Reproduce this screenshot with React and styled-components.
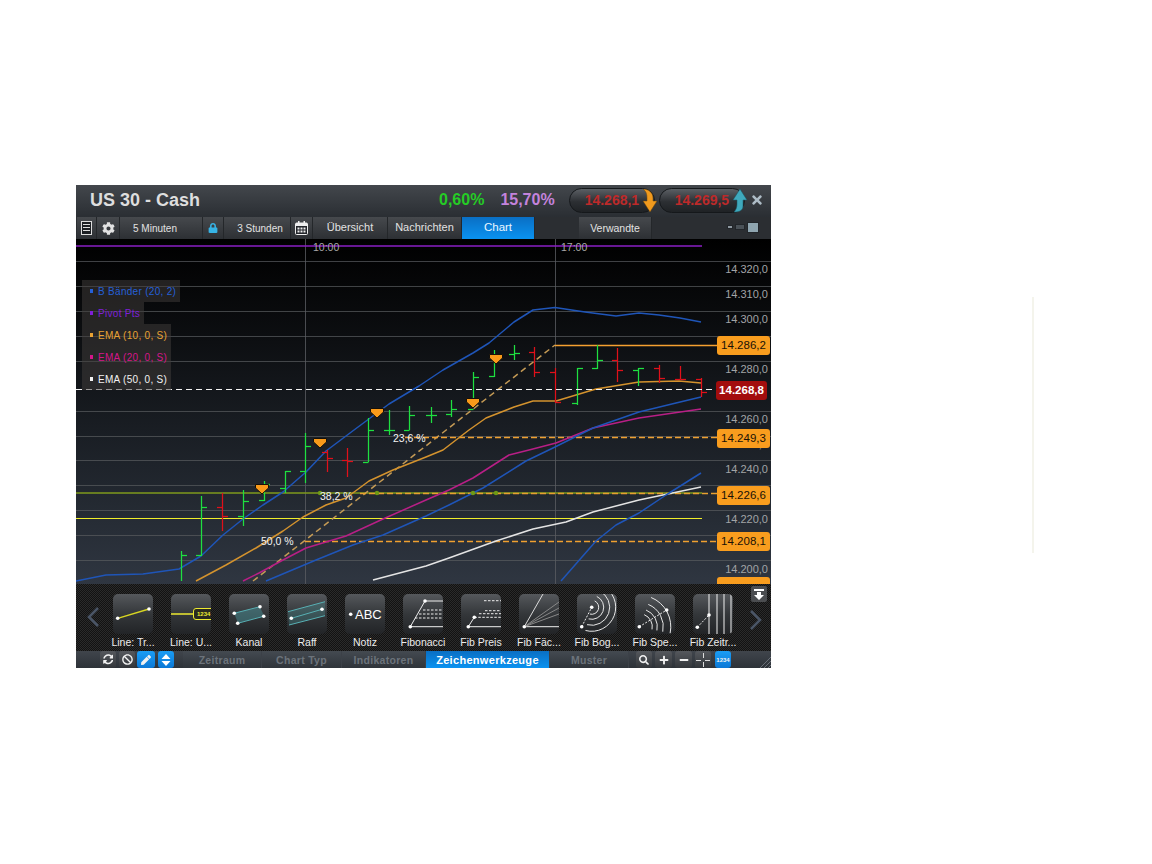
import React from 'react';
import styled, { createGlobalStyle } from 'styled-components';
import { FaCog, FaLock, FaSyncAlt, FaBan, FaPen, FaSearch, FaPlus, FaMinus, FaTimes } from 'react-icons/fa';

const GlobalStyle = createGlobalStyle`
  html, body {
    margin: 0;
    background: #fff;
    font-family: "Liberation Sans", Arial, sans-serif;
  }
`;

const Page = styled.div`
  display: flex;
  align-items: flex-start;
  padding: 185px 0 0 76px;
  min-height: 679px;
`;

const Widget = styled.div`
  width: 695px;
  height: 483px;
  display: flex;
  flex-direction: column;
  flex: none;
  overflow: hidden;
  background: #111;
`;

const FaintRule = styled.div`
  width: 2px;
  height: 256px;
  margin: 112px 0 0 261px;
  background: #f4f4ec;
`;

/* title */
const TitleBar = styled.div`
  height: 32px;
  display: flex;
  align-items: center;
  flex: none;
  box-sizing: border-box;
  padding: 0 0 2px 14px;
  background: linear-gradient(#43474c, #2a2e33);
`;

const Title = styled.div`
  width: 349px;
  flex: none;
  font-size: 18px;
  font-weight: 700;
  color: #dedede;
`;

const Percent = styled.div`
  font-size: 16px;
  font-weight: 700;
  color: ${(p) => p.$color};
  margin-right: ${(p) => p.$gap}px;
`;

const Pill = styled.div`
  position: relative;
  width: 86px;
  height: 25px;
  box-sizing: border-box;
  margin-right: 4px;
  padding-left: 15px;
  border-radius: 13px;
  border: 1px solid #15181b;
  background: linear-gradient(#5b5f64, #2c2f33 55%, #1f2225);
  font-size: 14px;
  font-weight: 700;
  line-height: 22px;
  color: #bd2a2a;
`;

const PillArrow = styled.svg`
  position: absolute;
  right: -3px;
  top: 0;
`;

const CloseButton = styled.div`
  display: flex;
  margin-left: 1px;
  color: #aebcc6;
  font-size: 14px;
`;

/* tabs */
const TabBar = styled.div`
  height: 22px;
  display: flex;
  flex: none;
  padding-left: 1px;
  background: #2b2e32;
`;

const Tab = styled.div`
  width: ${(p) => p.$w}px;
  margin-left: ${(p) => p.$ml || 0}px;
  padding: 0 ${(p) => p.$padRight || 0}px ${(p) => p.$padBottom || 0}px ${(p) => p.$padLeft || 0}px;
  flex: none;
  display: flex;
  align-items: center;
  justify-content: center;
  box-sizing: border-box;
  border-right: 1px solid #24272a;
  color: ${(p) => (p.$active ? '#eaf6ff' : '#e2e2e2')};
  font-size: ${(p) => p.$size || 11}px;
  background: ${(p) => (p.$active ? 'linear-gradient(#0a6fc4, #0a92f0)' : 'linear-gradient(#46494d, #2d3034)')};
`;

const WindowIcons = styled.div`
  margin-left: auto;
  padding: 0 12px 2px 0;
  display: flex;
  align-items: center;
  gap: 2px;
`;

const WindowIcon = styled.div`
  width: ${(p) => p.$w}px;
  height: ${(p) => p.$h}px;
  box-sizing: border-box;
  background: ${(p) => p.$color};
  border: 1px solid #22262a;
`;

/* chart */
const ChartArea = styled.div`
  position: relative;
  height: 345px;
  flex: none;
  overflow: hidden;
  background: linear-gradient(#000 0%, #0d0f12 30%, #1e232a 65%, #2f3641 100%);
`;

const ChartSvg = styled.svg`
  display: block;
  font-family: "Liberation Sans", Arial, sans-serif;
`;

const Legend = styled.div`
  position: absolute;
  left: 6px;
  top: 41px;
  display: flex;
  flex-direction: column;
  align-items: flex-start;
`;

const LegendRow = styled.div`
  height: 22px;
  display: flex;
  align-items: center;
  gap: 5px;
  padding: 0 4px 0 8px;
  background: rgba(66, 62, 60, 0.5);
  color: ${(p) => p.$color};
  font-size: 10px;
  letter-spacing: 0.3px;
  &::before {
    content: '';
    width: 3px;
    height: 4px;
    background: ${(p) => p.$color};
  }
`;

const PriceTag = styled.div`
  position: absolute;
  left: ${(p) => (p.$current ? 640 : 641)}px;
  top: ${(p) => p.$top}px;
  width: ${(p) => (p.$current ? 51 : 53)}px;
  height: 19px;
  border-radius: 3px;
  text-align: center;
  line-height: 19px;
  font-size: 11.5px;
  font-weight: ${(p) => (p.$current ? 700 : 400)};
  color: ${(p) => (p.$current ? '#fff' : '#1a1206')};
  background: ${(p) => (p.$current ? '#a30d0d' : '#f99d1e')};
`;

/* drawing tools */
const ToolStrip = styled.div`
  position: relative;
  height: 67px;
  flex: none;
  display: flex;
  padding: 10px 0 0 10px;
  box-sizing: border-box;
  background: repeating-conic-gradient(#121212 0 25%, #2a2a2a 0 50%) 0 0 / 2px 2px;
`;

const Chevron = styled.svg`
  flex: none;
  margin-top: ${(p) => p.$top}px;
  margin-left: ${(p) => p.$left}px;
  margin-right: ${(p) => p.$right}px;
`;

const Tool = styled.div`
  width: 58px;
  flex: none;
  display: flex;
  flex-direction: column;
  align-items: center;
`;

const ToolButton = styled.div`
  width: 40px;
  height: 40px;
  border-radius: 5px;
  overflow: hidden;
  background: linear-gradient(#55585c, #34373a 50%, #222427);
`;

const ToolLabel = styled.div`
  margin-top: 2px;
  font-size: 10.5px;
  line-height: 13px;
  color: #ececec;
  white-space: nowrap;
`;

const CollapseButton = styled.div`
  position: absolute;
  left: 675px;
  top: 2px;
  width: 16px;
  height: 16px;
  border-radius: 2px;
  display: flex;
  justify-content: center;
  align-items: center;
  background: #4b4d50;
`;

/* bottom */
const BottomBar = styled.div`
  position: relative;
  height: 17px;
  flex: none;
  display: flex;
  align-items: stretch;
  padding-left: 24px;
  background: linear-gradient(#40454c, #2d3238);
`;

const SquareButton = styled.div`
  width: ${(p) => p.$w || 16}px;
  margin-left: ${(p) => p.$ml || 0}px;
  margin-right: ${(p) => p.$mr || 2}px;
  flex: none;
  border-radius: 3px;
  display: flex;
  align-items: center;
  justify-content: center;
  font-size: ${(p) => p.$size || 11}px;
  color: #f1f1f1;
  background: ${(p) =>
    p.$blue ? 'linear-gradient(#1a9df5, #0b78d6)' : 'linear-gradient(#55585d, #33363a)'};
`;

const BottomTab = styled.div`
  width: ${(p) => p.$w}px;
  margin-left: ${(p) => p.$ml || 0}px;
  flex: none;
  box-sizing: border-box;
  display: flex;
  align-items: center;
  justify-content: center;
  font-size: ${(p) => (p.$active ? 11 : 10.5)}px;
  font-weight: 700;
  letter-spacing: 0.3px;
  color: ${(p) => (p.$active ? '#fff' : '#6c737b')};
  border-right: 1px solid #3c4148;
  background: ${(p) => (p.$active ? 'linear-gradient(#0a6fc4, #0a92f0)' : 'linear-gradient(#444a51, #2f343a)')};
`;

const Grip = styled.svg`
  position: absolute;
  right: 0;
  bottom: 0;
`;

const gridYs = [261.5, 286.5, 311.5, 336.5, 361.5, 411.5, 436.5, 460.5, 485.5, 510.5, 535.5, 560.5];
const axis = [
  ['14.320,0', 273], ['14.310,0', 298], ['14.300,0', 323], ['14.280,0', 373], ['14.260,0', 423],
  ['14.250,0', 448], ['14.240,0', 473], ['14.220,0', 523], ['14.200,0', 573],
];

const lines = [
  ['#1f55b8', '76,581 106,575 143,574 179,569 201,556 223,535 243,519 263,505 283,492 306,472 326,451 350,433 389,404 419,386 443,370 473,353 489,343 514,322 533,310 555,307.5 585,312 616,316 639,313 659,315 680,318 701,322'],
  ['#d4932e', '196,581 226,565 256,548 283,531 303,517 326,505 346,498 369,481 393,470 426,457 443,450 469,430 486,418 514,407 533,401 556,401 596,389 639,382 679,381 701,383'],
  ['#b81f86', '243,581 259,573 283,560 306,548 346,536 383,519 426,500 449,490 473,478 509,455 529,450 556,443 593,428 639,418 701,409'],
  ['#1f55b8', '266,581 316,560 353,545 383,535 426,516 449,505 483,488 526,461 553,448 593,428 639,412 676,403 701,397'],
  ['#e4e4e4', '373,580 426,566 449,558 496,541 533,529 566,522 593,512 639,500 701,487'],
  ['#1f55b8', '561,581 596,541 616,525 639,513 666,495 701,473'],
];

const bars = [
  [181, 551, 581, null, 555, 'g'], [201, 496, 556, 555, 507, 'g'], [222, 493, 531, 507, 516, 'r'],
  [243, 490, 526, 516, 501, 'g'], [264, 481, 501, 500, 484, 'g'], [285, 471, 493, 488, 471, 'g'],
  [305, 433, 483, 471, 446, 'g'], [327, 450, 472, 452, 458, 'r'], [347, 448, 477, 460, 461, 'r'],
  [368, 418, 462, 462, 430, 'g'], [389, 410, 435, 430, 430, 'g'], [409, 406, 430, 430, 415, 'g'],
  [431, 407, 423, 415, 415, 'g'], [451, 400, 417, 414, 409, 'g'], [473, 372, 408, 409, 377, 'g'],
  [494, 350, 377, 376, 356, 'g'], [514, 345, 360, 354, 353, 'g'], [534, 347, 377, 352, 372, 'r'],
  [555, 368, 403, 372, 402, 'r'], [577, 368, 405, 403, 368, 'g'], [597, 345, 369, 368, 360, 'g'],
  [617, 348, 382, 360, 370, 'r'], [638, 368, 386, 370, 368, 'g'], [659, 365, 383, 368, 378, 'r'],
  [680, 366, 379, 379, 379, 'r'], [701, 378, 397, 379, 392, 'r'],
];

const markers = [[262, 489], [320, 443], [377, 413], [473, 403], [496, 359]];

const Chart = () => (
  <ChartSvg width="695" height="345" viewBox="76 239 695 345">
    {gridYs.map((y) => (
      <line key={y} x1="76" x2="771" y1={y} y2={y} stroke="#5a5d60" strokeOpacity="0.7" />
    ))}
    <line x1="305.5" x2="305.5" y1="239" y2="584" stroke="#5a5d62" strokeOpacity="0.8" />
    <line x1="555.5" x2="555.5" y1="239" y2="584" stroke="#5a5d62" strokeOpacity="0.8" />
    <line x1="76" x2="702" y1="246" y2="246" stroke="#8a1fc4" strokeWidth="1.5" />
    <text x="313" y="251" fontSize="10.5" fill="#a8a8a8">10:00</text>
    <text x="561" y="251" fontSize="10.5" fill="#a8a8a8">17:00</text>
    {axis.map(([t, y]) => (
      <text key={t} x="768" y={y} fontSize="11" textAnchor="end" fill="#a2a4a6">{t}</text>
    ))}
    <line x1="76" x2="702" y1="518.5" y2="518.5" stroke="#f0ee2a" strokeWidth="1.1" />
    <line x1="76" x2="702" y1="493" y2="493" stroke="#7f9a1c" strokeWidth="1.3" />
    <line x1="253" y1="581" x2="555" y2="345" stroke="#c49a55" strokeWidth="1.5" strokeDasharray="6 4" />
    <line x1="555" x2="717" y1="345.5" y2="345.5" stroke="#f5a030" strokeWidth="1.6" />
    <line x1="405" x2="717" y1="437.5" y2="437.5" stroke="#f0a030" strokeWidth="1.6" strokeDasharray="6 3" />
    <line x1="360" x2="717" y1="493.5" y2="493.5" stroke="#e8a030" strokeWidth="1.6" strokeDasharray="6 3" />
    <line x1="305" x2="717" y1="541.5" y2="541.5" stroke="#f0a030" strokeWidth="1.6" strokeDasharray="6 3" />
    {lines.map(([c, pts], i) => (
      <polyline key={i} points={pts} fill="none" stroke={c} strokeWidth="1.5" strokeLinejoin="round" />
    ))}
    {bars.map(([x, hi, lo, l, r, c]) => {
      const col = c === 'g' ? '#1fe040' : '#e0101a';
      return (
        <g key={x} stroke={col} strokeWidth="1.25">
          <line x1={x + 0.5} x2={x + 0.5} y1={hi} y2={lo} />
          {l !== null && <line x1={x - 5} x2={x + 0.5} y1={l + 0.5} y2={l + 0.5} />}
          <line x1={x + 0.5} x2={x + 6} y1={r + 0.5} y2={r + 0.5} />
        </g>
      );
    })}
    <line x1="76" x2="712" y1="389.5" y2="389.5" stroke="#f2f2f2" strokeWidth="1.2" strokeDasharray="6 4" />
    {[320, 377, 473, 496].map((x) => (
      <circle key={x} cx={x} cy="493" r="2.2" fill="#6f9a14" />
    ))}
    {markers.map(([x, y]) => (
      <path
        key={x}
        d={`M${x - 6.5} ${y - 4.5}h13v3.5l-6.5 6l-6.5 -6z`}
        fill="#f99a1a"
        stroke="#14100a"
        strokeWidth="1"
        strokeLinejoin="round"
      />
    ))}
    <text x="393" y="442" fontSize="10.5" fill="#f4f4f4">23,6 %</text>
    <text x="320" y="500" fontSize="10.5" fill="#f4f4f4">38,2 %</text>
    <text x="261" y="545" fontSize="10.5" fill="#f4f4f4">50,0 %</text>
  </ChartSvg>
);

const Dot = ({ x, y }) => <circle cx={x} cy={y} r="1.8" fill="#fff" />;

const arc = (cx, cy, r, from, to) => {
  const a = (from * Math.PI) / 180;
  const b = (to * Math.PI) / 180;
  return `M${cx + r * Math.cos(a)} ${cy + r * Math.sin(a)}A${r} ${r} 0 0 1 ${cx + r * Math.cos(b)} ${cy + r * Math.sin(b)}`;
};

const toolIcons = {
  trend: (
    <>
      <line x1="4.7" y1="24.3" x2="36" y2="15" stroke="#d8d622" strokeWidth="1.4" />
      <Dot x={4.7} y={24.3} /><Dot x={36} y={15} />
    </>
  ),
  level: (
    <>
      <line x1="0" y1="20" x2="22" y2="20" stroke="#eeea30" strokeWidth="1.4" />
      <rect x="22.5" y="14.5" width="20" height="11" rx="2.5" fill="#2a2a20" stroke="#eeea30" />
      <text x="26" y="22.3" fontSize="6" fontWeight="700" fill="#eeea30">1234</text>
    </>
  ),
  channel: (
    <>
      <polygon points="5,19 31,13 35,22 9,29" fill="#4b9aa0" fillOpacity="0.45" />
      <line x1="5" y1="19.3" x2="31" y2="12.7" stroke="#58b0b4" />
      <line x1="8.7" y1="29.3" x2="34.7" y2="22.3" stroke="#58b0b4" />
      <Dot x={5.3} y={19.3} /><Dot x={31} y={12.7} /><Dot x={34.7} y={22.3} /><Dot x={8.7} y={29.3} />
    </>
  ),
  raff: (
    <>
      <polygon points="1,17.7 38,7.7 38,21.7 2,31" fill="#4b9aa0" fillOpacity="0.3" />
      <line x1="1" y1="17.7" x2="38" y2="7.7" stroke="#58b0b4" />
      <line x1="4.3" y1="24.3" x2="35" y2="15.3" stroke="#58b0b4" />
      <line x1="2" y1="31" x2="38" y2="21.7" stroke="#58b0b4" />
      <Dot x={4.3} y={24.3} /><Dot x={35} y={15.3} />
    </>
  ),
  note: (
    <>
      <Dot x={5.7} y={20.3} />
      <text x="10" y="25" fontSize="13" fill="#fff">ABC</text>
    </>
  ),
  fibo: (
    <>
      <line x1="7.3" y1="32.7" x2="22" y2="7" stroke="#eee" />
      <line x1="22" y1="7" x2="40" y2="7" stroke="#eee" />
      <line x1="7.3" y1="32.7" x2="40" y2="32.7" stroke="#eee" />
      {[16, 20, 24].map((y) => (
        <line key={y} x1={36 - y} y1={y} x2="40" y2={y} stroke="#eee" strokeDasharray="2.5 1.5" />
      ))}
      <Dot x={7.3} y={32.7} /><Dot x={22} y={7} />
    </>
  ),
  price: (
    <>
      <line x1="7.3" y1="32.7" x2="40" y2="32.7" stroke="#eee" />
      <line x1="7.3" y1="32.7" x2="13.3" y2="23.3" stroke="#eee" />
      {[[23, 6.7], [13.3, 23.3], [18, 19.7], [24, 16.7]].map(([x, y]) => (
        <line key={y} x1={x} y1={y} x2="40" y2={y} stroke="#eee" strokeDasharray="2.5 1.5" />
      ))}
      <Dot x={7.3} y={32.7} /><Dot x={13.3} y={23.3} />
    </>
  ),
  fan: (
    <>
      <line x1="5.3" y1="32.7" x2="40" y2="32.7" stroke="#eee" />
      <line x1="5.3" y1="32.7" x2="24" y2="0" stroke="#ddd" />
      <line x1="5.3" y1="32.7" x2="40" y2="8" stroke="#888" />
      <line x1="5.3" y1="32.7" x2="40" y2="14" stroke="#888" />
      <line x1="5.3" y1="32.7" x2="40" y2="20" stroke="#888" />
      <Dot x={5.3} y={32.7} />
    </>
  ),
  arcs: (
    <>
      {[7, 12, 18, 24].map((r) => (
        <path key={r} d={arc(14.7, 13.3, r, -65, 105)} fill="none" stroke="#e8e8e8" />
      ))}
      <line x1="4.7" y1="32.7" x2="14.7" y2="13.3" stroke="#eee" strokeDasharray="2 1.5" />
      <Dot x={4.7} y={32.7} /><Dot x={14.7} y={13.3} />
    </>
  ),
  speed: (
    <>
      {[13, 18, 24, 31.5].map((r) => (
        <path key={r} d={arc(4.3, 32.7, r, -68, 12)} fill="none" stroke="#e8e8e8" />
      ))}
      <line x1="4.3" y1="32.7" x2="31.7" y2="16" stroke="#eee" strokeDasharray="2 1.5" />
      <Dot x={4.3} y={32.7} /><Dot x={31.7} y={16} />
    </>
  ),
  time: (
    <>
      {[16, 24, 31, 38].map((x) => (
        <line key={x} x1={x} x2={x} y1="0" y2="40" stroke="#f0f0f0" />
      ))}
      <line x1="4.3" y1="33.3" x2="16" y2="21" stroke="#eee" strokeDasharray="2 1.5" />
      <Dot x={4.3} y={33.3} /><Dot x={16} y={21} />
    </>
  ),
};

const tools = [
  ['trend', 'Line: Tr...'], ['level', 'Line: U...'], ['channel', 'Kanal'], ['raff', 'Raff'],
  ['note', 'Notiz'], ['fibo', 'Fibonacci'], ['price', 'Fib Preis'], ['fan', 'Fib Fäc...'],
  ['arcs', 'Fib Bog...'], ['speed', 'Fib Spe...'], ['time', 'Fib Zeitr...'],
];

const legend = [
  ['#2560d8', 'B Bänder (20, 2)'],
  ['#7f1fd8', 'Pivot Pts'],
  ['#e8a233', 'EMA (10, 0, S)'],
  ['#d4168a', 'EMA (20, 0, S)'],
  ['#f2f2f2', 'EMA (50, 0, S)'],
];

const ListIcon = () => (
  <svg width="11" height="14" viewBox="0 0 11 14">
    <rect x="0.5" y="0.5" width="10" height="13" fill="#1c1f23" stroke="#ddd" />
    {[3.5, 6.5, 9.5].map((y) => (
      <line key={y} x1="2" x2="9" y1={y} y2={y} stroke="#ddd" />
    ))}
  </svg>
);

const CalendarIcon = () => (
  <svg width="13" height="14" viewBox="0 0 13 14">
    <rect x="0.5" y="2" width="12" height="11.5" rx="1" fill="#22252a" stroke="#eee" />
    <rect x="1" y="2" width="11" height="3" fill="#eee" />
    <rect x="3" y="0" width="1.5" height="3" fill="#eee" />
    <rect x="8.5" y="0" width="1.5" height="3" fill="#eee" />
    {[2.5, 5.5, 8.5].map((x) =>
      [6.5, 9.5].map((y) => <rect key={`${x}${y}`} x={x} y={y} width="2" height="2" fill="#eee" />),
    )}
  </svg>
);

const DownArrow = () => (
  <PillArrow width="15" height="24" viewBox="0 0 15 24">
    <path d="M1 0C7 0 11 4 11 9V12H15L8 23L1 12H5V9C5 5 4 2 1 0Z" fill="#f09a1e" stroke="#6b470f" strokeWidth="0.5" />
  </PillArrow>
);

const UpArrow = () => (
  <PillArrow width="15" height="24" viewBox="0 0 15 24">
    <path d="M8 0L15 11H11V17C11 21 8 23 2 23C4 21 5 18 5 15V11H1Z" fill="#3fa9bd" stroke="#1b5560" strokeWidth="0.5" />
  </PillArrow>
);

const UpDownIcon = () => (
  <svg width="10" height="14" viewBox="0 0 10 14">
    <path d="M5 1L9.5 6H0.5Z M5 13L9.5 8H0.5Z" fill="#fff" />
  </svg>
);

const CrossIcon = () => (
  <svg width="14" height="14" viewBox="0 0 14 14" stroke="#ddd">
    <path d="M0 7.5H5M9 7.5H14M7.5 0V5M7.5 9V14" />
  </svg>
);

export default function App() {
  return (
    <Page>
      <GlobalStyle />
      <Widget>
        <TitleBar>
          <Title>US 30 - Cash</Title>
          <Percent $color="#25cc25" $gap={16}>0,60%</Percent>
          <Percent $color="#c483dc" $gap={14}>15,70%</Percent>
          <Pill>14.268,1<DownArrow /></Pill>
          <Pill>14.269,5<UpArrow /></Pill>
          <CloseButton><FaTimes /></CloseButton>
        </TitleBar>

        <TabBar>
          <Tab $w={20}><ListIcon /></Tab>
          <Tab $w={23} $size={13}><FaCog /></Tab>
          <Tab $w={83} $size={10} $padRight={12}>5 Minuten</Tab>
          <Tab $w={21} $size={10}><FaLock color="#37b4e6" /></Tab>
          <Tab $w={67} $size={10} $padLeft={6}>3 Stunden</Tab>
          <Tab $w={22}><CalendarIcon /></Tab>
          <Tab $w={75} $padBottom={2}>Übersicht</Tab>
          <Tab $w={74} $padBottom={2}>Nachrichten</Tab>
          <Tab $w={73} $size={11.5} $padBottom={2} $active>Chart</Tab>
          <Tab $w={73} $ml={44} $size={10.5}>Verwandte</Tab>
          <WindowIcons>
            <WindowIcon $w={6} $h={4} $color="#8d979f" />
            <WindowIcon $w={10} $h={6} $color="#4a5157" />
            <WindowIcon $w={12} $h={11} $color="#8fa5b0" />
          </WindowIcons>
        </TabBar>

        <ChartArea>
          <Chart />
          <Legend>
            {legend.map(([color, text]) => (
              <LegendRow key={text} $color={color}>{text}</LegendRow>
            ))}
          </Legend>
          <PriceTag $top={97}>14.286,2</PriceTag>
          <PriceTag $top={142} $current>14.268,8</PriceTag>
          <PriceTag $top={190}>14.249,3</PriceTag>
          <PriceTag $top={247}>14.226,6</PriceTag>
          <PriceTag $top={293}>14.208,1</PriceTag>
          <PriceTag $top={338} />
        </ChartArea>

        <ToolStrip>
          <Chevron width="14" height="20" viewBox="0 0 14 20" $top={13} $left={0} $right={4}>
            <path d="M12 1L3 10L12 19" fill="none" stroke="#4a5566" strokeWidth="2.5" />
          </Chevron>
          {tools.map(([key, label]) => (
            <Tool key={key}>
              <ToolButton>
                <svg width="40" height="40" viewBox="0 0 40 40" style={{ display: 'block' }}>
                  {toolIcons[key]}
                </svg>
              </ToolButton>
              <ToolLabel>{label}</ToolLabel>
            </Tool>
          ))}
          <Chevron width="14" height="20" viewBox="0 0 14 20" $top={16} $left={7} $right={0}>
            <path d="M2 1L11 10L2 19" fill="none" stroke="#4a5566" strokeWidth="2.5" />
          </Chevron>
          <CollapseButton>
            <svg width="10" height="11" viewBox="0 0 10 11">
              <path d="M0 0H10V2H0Z M3 3H7V6H10L5 11L0 6H3Z" fill="#fff" />
            </svg>
          </CollapseButton>
        </ToolStrip>

        <BottomBar>
          <SquareButton $size={10.5} $mr={3}><FaSyncAlt /></SquareButton>
          <SquareButton $size={11} $mr={2}><FaBan /></SquareButton>
          <SquareButton $blue $w={18} $mr={3} $size={10}><FaPen /></SquareButton>
          <SquareButton $blue><UpDownIcon /></SquareButton>
          <BottomTab $w={79} $ml={7}>Zeitraum</BottomTab>
          <BottomTab $w={80}>Chart Typ</BottomTab>
          <BottomTab $w={84}>Indikatoren</BottomTab>
          <BottomTab $w={124} $active>Zeichenwerkzeuge</BottomTab>
          <BottomTab $w={79}>Muster</BottomTab>
          <SquareButton $w={16} $ml={7} $mr={3} $size={10}><FaSearch /></SquareButton>
          <SquareButton $w={17} $mr={3} $size={10}><FaPlus /></SquareButton>
          <SquareButton $w={17} $mr={3} $size={10}><FaMinus /></SquareButton>
          <SquareButton $w={16} $mr={4}><CrossIcon /></SquareButton>
          <SquareButton $blue $w={16} $size={6}><b>1234</b></SquareButton>
          <Grip width="12" height="12" viewBox="0 0 12 12" stroke="#6a7078">
            <path d="M1 12L12 1M5 12L12 5M9 12L12 9" />
          </Grip>
        </BottomBar>
      </Widget>
      <FaintRule />
    </Page>
  );
}
